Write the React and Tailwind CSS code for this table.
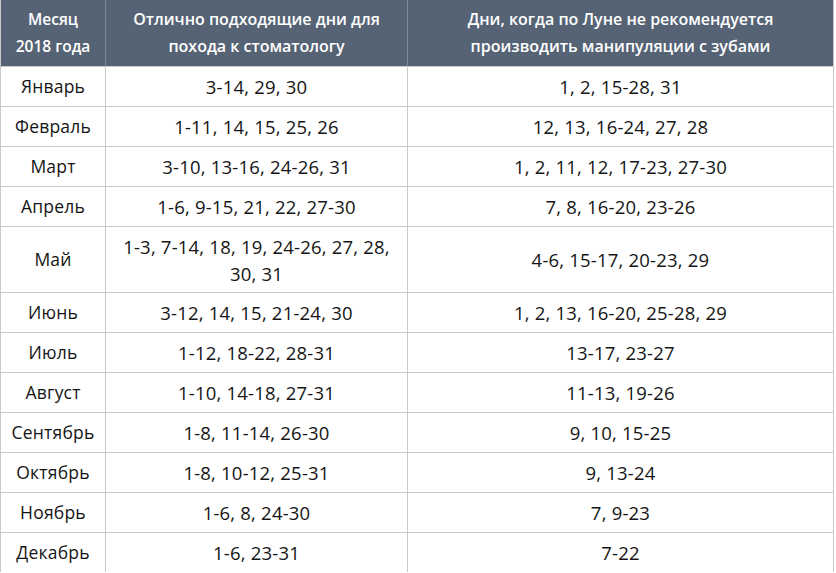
const rows = [
  ['Январь', '3-14, 29, 30', '1, 2, 15-28, 31'],
  ['Февраль', '1-11, 14, 15, 25, 26', '12, 13, 16-24, 27, 28'],
  ['Март', '3-10, 13-16, 24-26, 31', '1, 2, 11, 12, 17-23, 27-30'],
  ['Апрель', '1-6, 9-15, 21, 22, 27-30', '7, 8, 16-20, 23-26'],
  ['Май', '1-3, 7-14, 18, 19, 24-26, 27, 28, 30, 31', '4-6, 15-17, 20-23, 29'],
  ['Июнь', '3-12, 14, 15, 21-24, 30', '1, 2, 13, 16-20, 25-28, 29'],
  ['Июль', '1-12, 18-22, 28-31', '13-17, 23-27'],
  ['Август', '1-10, 14-18, 27-31', '11-13, 19-26'],
  ['Сентябрь', '1-8, 11-14, 26-30', '9, 10, 15-25'],
  ['Октябрь', '1-8, 10-12, 25-31', '9, 13-24'],
  ['Ноябрь', '1-6, 8, 24-30', '7, 9-23'],
  ['Декабрь', '1-6, 23-31', '7-22'],
];

export default function App() {
  return (
    <div className="w-[836px] bg-white" style={{ fontFamily: '"Open Sans", "DejaVu Sans", sans-serif' }}>
      <div className="grid grid-cols-[105px_302px_1fr] w-[834px] border-l border-r border-[#c9c9c9]">
        <div className="bg-[#566375] text-white font-semibold text-[15.5px] leading-[27px] h-[66px] flex items-center justify-center text-center border-r border-[#7c8796]">
          Месяц<br />2018 года
        </div>
        <div className="bg-[#566375] text-white font-semibold text-[16px] leading-[27px] h-[66px] flex items-center justify-center text-center border-r border-[#7c8796]">
          Отлично подходящие дни для<br />похода к стоматологу
        </div>
        <div className="bg-[#566375] text-white font-semibold text-[16px] leading-[27px] h-[66px] flex items-center justify-center text-center">
          Дни, когда по Луне не рекомендуется<br />производить манипуляции с зубами
        </div>
        {rows.map((r) => {
          const tall = r[0] === 'Май';
          const h = tall ? 'h-[66px]' : 'h-[40px]';
          return [
            <div key={r[0] + 'a'} className={`${h} border-t border-r border-[#c9c9c9] flex items-center justify-center text-[17.5px] text-[#151515] tracking-[0.2px]`}>{r[0]}</div>,
            <div key={r[0] + 'b'} className={`${h} border-t border-r border-[#c9c9c9] flex items-center justify-center text-center px-3 leading-[27px] text-[18.5px] text-[#151515] tracking-[0.2px]`}>{r[1]}</div>,
            <div key={r[0] + 'c'} className={`${h} border-t border-[#c9c9c9] flex items-center justify-center text-center text-[18.5px] text-[#151515] tracking-[0.2px]`}>{r[2]}</div>,
          ];
        })}
      </div>
    </div>
  );
}
